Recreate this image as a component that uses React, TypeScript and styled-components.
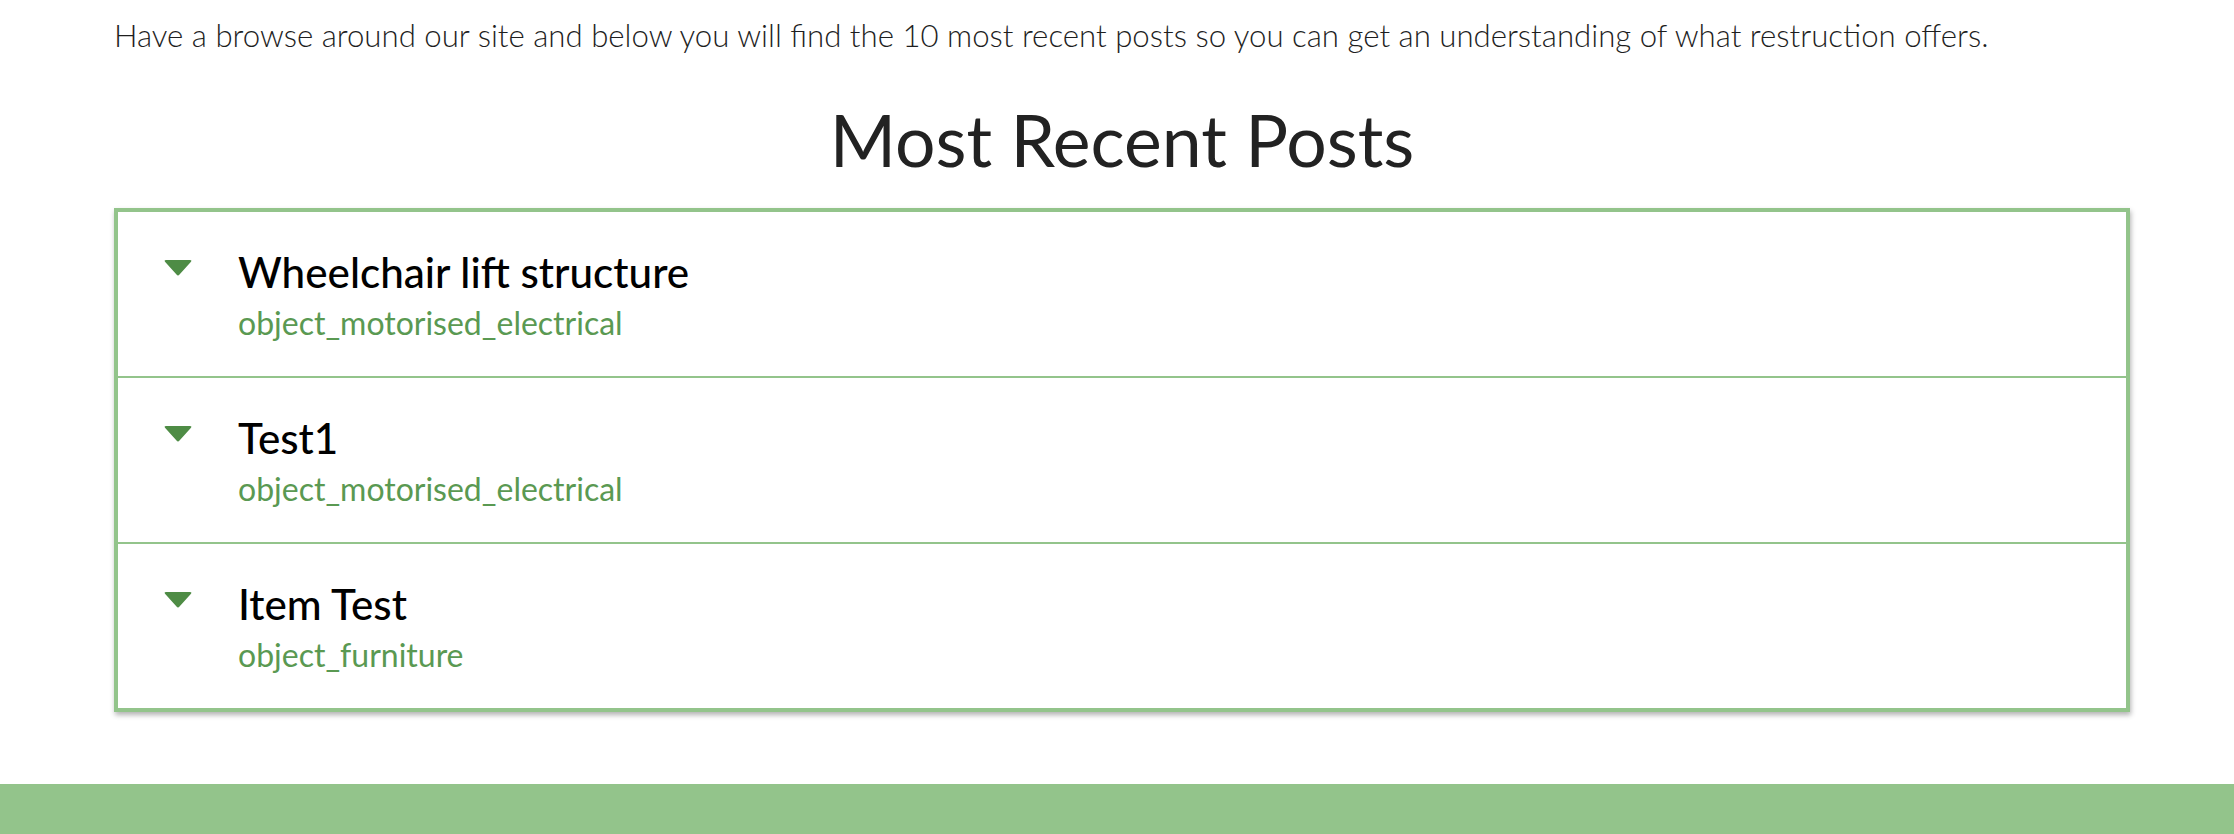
import React from "react";
import styled, { createGlobalStyle } from "styled-components";

const GlobalStyle = createGlobalStyle`
  html, body {
    margin: 0;
    padding: 0;
    background: #ffffff;
  }
  body {
    font-family: Lato, "Open Sans", sans-serif;
    color: #222222;
  }
`;

const Page = styled.div`
  display: flex;
  flex-direction: column;
  min-height: 834px;
`;

const Main = styled.main`
  padding: 17px 104px 0 114px;
  display: flex;
  flex-direction: column;
`;

const Intro = styled.p`
  margin: 0;
  font-size: 31.2px;
  font-weight: 300;
  line-height: 37px;
  color: #1e1e1e;
  white-space: nowrap;
`;

const Heading = styled.h1`
  margin: 43px 0 0;
  font-size: 71.5px;
  font-weight: 400;
  line-height: 85px;
  text-align: center;
  color: #222222;
`;

const PostList = styled.ul`
  list-style: none;
  margin: 26px 0 0;
  padding: 0;
  border: 4px solid #93c48b;
  box-shadow: 1px 3px 5px rgba(0, 0, 0, 0.3);
  background: #ffffff;
`;

const PostRow = styled.li`
  display: grid;
  grid-template-columns: 28px 1fr;
  column-gap: 46px;
  padding: 35px 46px 34px;
  & + & {
    border-top: 2px solid #93c48b;
  }
`;

const Caret = styled.svg`
  display: block;
  width: 28px;
  height: 16px;
  margin-top: 13px;
  fill: #4e8c45;
`;

const PostText = styled.div`
  display: flex;
  flex-direction: column;
  gap: 7px;
`;

const PostTitle = styled.div`
  font-size: 42.2px;
  font-weight: 500;
  line-height: 49px;
  color: #000000;
`;

const PostCategory = styled.div`
  font-size: 32px;
  font-weight: 400;
  line-height: 39px;
  color: #5a9952;
`;

const Footer = styled.footer`
  margin-top: 72px;
  flex: 1;
  min-height: 52px;
  background: #93c48b;
`;

const posts = [
  { title: "Wheelchair lift structure", category: "object_motorised_electrical" },
  { title: "Test1", category: "object_motorised_electrical" },
  { title: "Item Test", category: "object_furniture" },
];

function CaretIcon() {
  return (
    <Caret viewBox="0 0 28 16" aria-hidden="true">
      <path d="M2.2 0 H25.8 Q28.4 0 26.8 1.9 L15.5 14.6 Q14 16.3 12.5 14.6 L1.2 1.9 Q-0.4 0 2.2 0 Z" />
    </Caret>
  );
}

export default function App() {
  return (
    <Page>
      <GlobalStyle />
      <Main>
        <Intro>
          Have a browse around our site and below you will find the 10 most recent posts so you can get an
          understanding of what restruction offers.
        </Intro>
        <Heading>Most Recent Posts</Heading>
        <PostList>
          {posts.map((p) => (
            <PostRow key={p.title}>
              <CaretIcon />
              <PostText>
                <PostTitle>{p.title}</PostTitle>
                <PostCategory>{p.category}</PostCategory>
              </PostText>
            </PostRow>
          ))}
        </PostList>
      </Main>
      <Footer />
    </Page>
  );
}
